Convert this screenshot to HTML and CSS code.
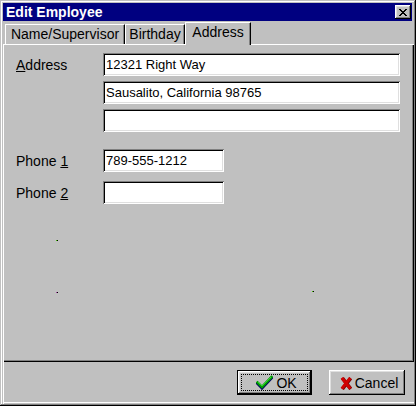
FILE: index.html
```html
<!DOCTYPE html>
<html>
<head>
<meta charset="utf-8">
<link rel="stylesheet" href="styles.css">
</head>
<body>
<div class="window">
  <div class="titlebar">
    <span class="title">Edit Employee</span>
    <div class="close">
      <svg width="8" height="7" viewBox="0 0 8 7"><path d="M0 0h2v1H0zM6 0h2v1H6zM1 1h2v1H1zM5 1h2v1H5zM2 2h4v1H2zM3 3h2v1H3zM2 4h4v1H2zM1 5h2v1H1zM5 5h2v1H5zM0 6h2v1H0zM6 6h2v1H6z" fill="#000"/></svg>
    </div>
  </div>
  <div class="tabs">
    <div class="tab t1">Name/Supervisor</div>
    <div class="tab t2">Birthday</div>
    <div class="tab t3 active">Address</div>
  </div>
  <div class="page">
    <div class="row">
      <span class="label"><u>A</u>ddress</span>
      <div class="field wide">12321 Right Way</div>
    </div>
    <div class="row">
      <span class="label"></span>
      <div class="field wide">Sausalito, California 98765</div>
    </div>
    <div class="row">
      <span class="label"></span>
      <div class="field wide"></div>
    </div>
    <div class="row gap-lg">
      <span class="label">Phone <u>1</u></span>
      <div class="field narrow">789-555-1212</div>
    </div>
    <div class="row gap-md">
      <span class="label">Phone <u>2</u></span>
      <div class="field narrow"></div>
    </div>
    <span class="speck s1"></span>
    <span class="speck s2"></span>
    <span class="speck s3"></span>
  </div>
  <div class="footer">
    <div class="btn default">
      <svg width="17" height="15" viewBox="0 0 17 15">
        <path d="M1.5 8.5 L6 13 L15.5 3" stroke="#000060" stroke-width="3" fill="none" stroke-linecap="square"/>
        <path d="M1.5 7.5 L6 12 L15.5 2" stroke="#00a000" stroke-width="2.6" fill="none" stroke-linecap="square"/>
        <path d="M2 7 L6 11 L15 2" stroke="#40e040" stroke-width="0.8" fill="none"/>
      </svg>
      <span>OK</span>
    </div>
    <div class="btn">
      <svg width="12" height="14" viewBox="0 0 12 14">
        <path d="M1.8 1.8 L10.2 12.6 M10.2 1.8 L1.8 12.6" stroke="#800000" stroke-width="3.6" fill="none" transform="translate(0.6 0.4)"/>
        <path d="M1.8 1.8 L10.2 12.6 M10.2 1.8 L1.8 12.6" stroke="#d00000" stroke-width="3" fill="none"/>
      </svg>
      <span>Cancel</span>
    </div>
  </div>
</div>
</body>
</html>
```

FILE: styles.css
```css
html, body {
  margin: 0;
  padding: 0;
  background: #c0c0c0;
}

.window {
  width: 416px;
  height: 406px;
  box-sizing: border-box;
  padding: 3px 2px 2px 3px;
  background: #c0c0c0;
  box-shadow: inset -1px -1px 0 #000, inset 1px 1px 0 #c0c0c0, inset -2px -2px 0 #808080, inset 2px 2px 0 #fff;
  display: flex;
  flex-direction: column;
  font-family: "Liberation Sans", Arial, sans-serif;
  font-size: 14px;
  color: #000;
}

.titlebar {
  height: 18px;
  margin-right: 2px;
  background: #000080;
  display: flex;
  align-items: center;
  justify-content: space-between;
  padding-left: 3px;
  flex: none;
}

.title {
  color: #fff;
  font-weight: bold;
  font-size: 14px;
  line-height: 18px;
}

.close {
  width: 16px;
  height: 14px;
  margin-right: 1px;
  background: #c0c0c0;
  box-shadow: inset -1px -1px 0 #000, inset 1px 1px 0 #fff, inset -2px -2px 0 #808080, inset 2px 2px 0 #dfdfdf;
  display: flex;
  align-items: center;
  justify-content: center;
}

.close svg {
  display: block;
  margin-left: -1px;
}

.tabs {
  display: flex;
  align-items: flex-end;
  height: 22px;
  margin-top: 1px;
  padding-left: 2px;
  flex: none;
}

.tab {
  height: 20px;
  box-sizing: border-box;
  border-left: 1px solid #fff;
  border-top: 1px solid #fff;
  border-right: 1px solid #000;
  box-shadow: inset -1px 0 0 #808080;
  padding-top: 1px;
  text-align: center;
  line-height: 16px;
  white-space: nowrap;
  background: #c0c0c0;
}

.t1 { width: 120px; }
.t2 { width: 60px; }
.t3 { width: 66px; }

.tab.active {
  height: 23px;
  margin-bottom: -1px;
  position: relative;
  z-index: 1;
}

.page {
  height: 318px;
  box-sizing: border-box;
  box-shadow: inset 1px 1px 0 #fff, inset -1px -1px 0 #000, inset -2px -2px 0 #808080;
  padding: 9px 0 0 13px;
  position: relative;
  flex: none;
}

.row {
  display: flex;
  align-items: center;
}

.row + .row { margin-top: 5px; }
.row.gap-lg { margin-top: 17px; }
.row.gap-md { margin-top: 9px; }

.label {
  width: 87px;
  flex: none;
  white-space: nowrap;
}

.field {
  height: 23px;
  box-sizing: border-box;
  background: #fff;
  box-shadow: inset 1px 1px 0 #808080, inset -1px -1px 0 #fff, inset 2px 2px 0 #000, inset -2px -2px 0 #dfdfdf;
  padding: 0 3px;
  display: flex;
  align-items: center;
  white-space: nowrap;
  font-size: 13px;
}

.wide { width: 297px; }
.narrow { width: 121px; }

.speck {
  position: absolute;
  width: 2px;
  height: 1px;
}
.s1 { left: 53px; top: 196px; background: linear-gradient(to right, #40c000 50%, #000 50%); }
.s2 { left: 53px; top: 248px; background: linear-gradient(to right, #a040a0 50%, #000 50%); }
.s3 { left: 309px; top: 247px; background: linear-gradient(to right, #40c000 50%, #000 50%); }

.footer {
  height: 42px;
  box-sizing: border-box;
  display: flex;
  justify-content: flex-end;
  align-items: flex-start;
  gap: 17px;
  padding: 8px 9px 0 0;
  box-shadow: inset 1px 0 0 #fff, inset 0 -1px 0 #c0c0c0, inset 0 -2px 0 #fff;
  flex: none;
}

.btn {
  height: 25px;
  width: 76px;
  box-sizing: border-box;
  background: #c0c0c0;
  box-shadow: inset -1px -1px 0 #000, inset 1px 1px 0 #fff, inset -2px -2px 0 #808080, inset 2px 2px 0 #dfdfdf;
  display: flex;
  align-items: center;
  justify-content: center;
  gap: 3px;
  padding-left: 4px;
  position: relative;
}

.btn svg { display: block; flex: none; }

.btn.default {
  width: 75px;
  border: 1px solid #000;
}

.btn.default::after {
  content: "";
  position: absolute;
  left: 3px;
  top: 3px;
  right: 3px;
  bottom: 3px;
  border: 1px dotted #000;
}
```
